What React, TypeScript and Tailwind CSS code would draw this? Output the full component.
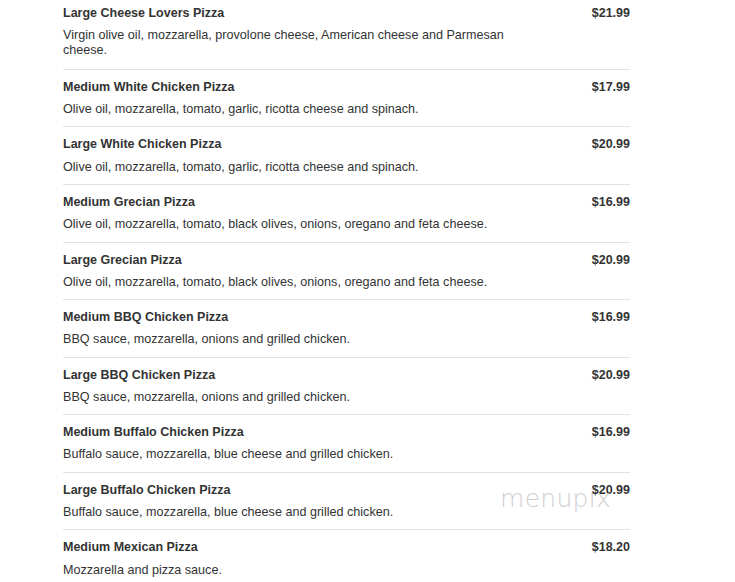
import React from "react";

const items = [
  { name: "Large Cheese Lovers Pizza", price: "$21.99", desc: "Virgin olive oil, mozzarella, provolone cheese, American cheese and Parmesan cheese." },
  { name: "Medium White Chicken Pizza", price: "$17.99", desc: "Olive oil, mozzarella, tomato, garlic, ricotta cheese and spinach." },
  { name: "Large White Chicken Pizza", price: "$20.99", desc: "Olive oil, mozzarella, tomato, garlic, ricotta cheese and spinach." },
  { name: "Medium Grecian Pizza", price: "$16.99", desc: "Olive oil, mozzarella, tomato, black olives, onions, oregano and feta cheese." },
  { name: "Large Grecian Pizza", price: "$20.99", desc: "Olive oil, mozzarella, tomato, black olives, onions, oregano and feta cheese." },
  { name: "Medium BBQ Chicken Pizza", price: "$16.99", desc: "BBQ sauce, mozzarella, onions and grilled chicken." },
  { name: "Large BBQ Chicken Pizza", price: "$20.99", desc: "BBQ sauce, mozzarella, onions and grilled chicken." },
  { name: "Medium Buffalo Chicken Pizza", price: "$16.99", desc: "Buffalo sauce, mozzarella, blue cheese and grilled chicken." },
  { name: "Large Buffalo Chicken Pizza", price: "$20.99", desc: "Buffalo sauce, mozzarella, blue cheese and grilled chicken." },
  { name: "Medium Mexican Pizza", price: "$18.20", desc: "Mozzarella and pizza sauce." },
];

export default function App() {
  return (
    <div className="relative w-[735px] h-[582px] overflow-hidden bg-white text-[#333]" style={{ fontFamily: '"Liberation Sans", Arial, sans-serif' }}>
      <div className="ml-[63px] w-[567px] -mt-[4.4px]">
        {items.map((it, i) => (
          <div key={i} className={(i > 0 ? "border-t border-[#e3e3e3] pb-[9.4px] " : "pb-[11px] ") + "pt-[8px]"}>
            <div className="flex justify-between items-start">
              <div className="text-[12.5px] leading-[18px] font-bold">{it.name}</div>
              <div className="text-[12.5px] leading-[18px] font-bold">{it.price}</div>
            </div>
            <div className="mt-[6.2px] w-[460px] text-[12.6px] leading-[15px]">{it.desc}</div>
          </div>
        ))}
      </div>
      <div className="absolute left-[500px] top-[484px] text-[#cfcfcf] text-[25px] leading-[30px] pointer-events-none" style={{ fontFamily: '"DejaVu Sans", sans-serif', fontWeight: 200, letterSpacing: "0.3px" }}>
        menupix
      </div>
    </div>
  );
}
